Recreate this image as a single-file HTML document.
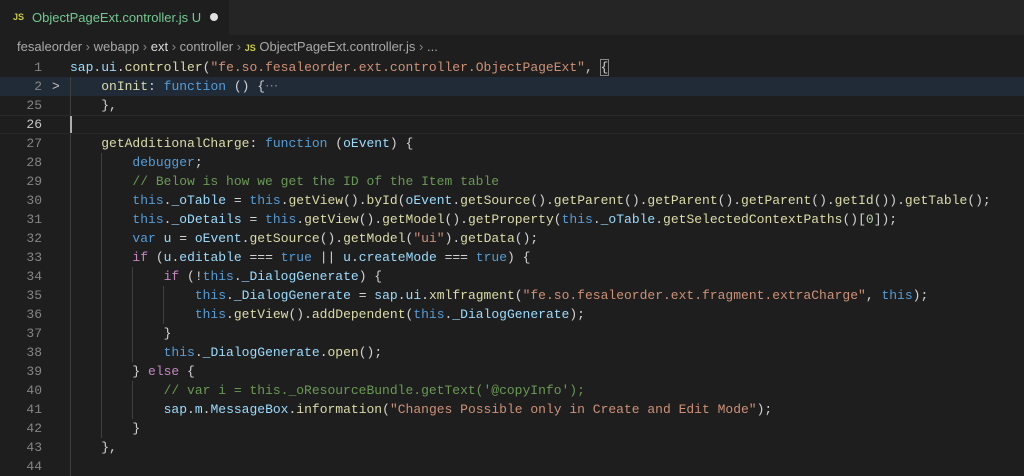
<!DOCTYPE html>
<html><head><meta charset="utf-8"><style>
body{margin:0;width:1024px;height:475px;background:#1e1e1e;overflow:hidden;font-family:"Liberation Sans",sans-serif;position:relative}
.tabs{position:absolute;left:0;top:0;width:1024px;height:35px;background:#252526}
.tab{position:absolute;left:0;top:0;width:229px;height:35px;background:#1e1e1e;color:#73c991;font-size:13px;line-height:35px}
.js{color:#cbcb41;font-weight:bold;font-size:9px;position:absolute;left:13px;top:0}
.bc{position:absolute;left:17px;top:37px;height:20px;line-height:20px;color:#a9a9a9;font-size:13px;white-space:pre}
.code{position:absolute;left:0;top:58px;width:1024px;font-family:"Liberation Mono",monospace;font-size:13px}
.l{height:19px;line-height:19px;white-space:pre;position:relative}
.n{position:absolute;left:0;width:42px;text-align:right;color:#858585}
.t{position:absolute;left:70px;color:#d4d4d4}
.g{position:absolute;top:0;width:1px;height:19px;background:#404040}
.v{color:#9cdcfe}.f{color:#dcdcaa}.s{color:#ce9178}.k{color:#569cd6}.c{color:#6a9955}.p{color:#c586c0}.m{color:#b5cea8}.o{color:#4ec9b0}
</style></head><body>
<div class="tabs"><div class="tab"><span class="js">JS</span><span style="position:absolute;left:32px">ObjectPageExt.controller.js U</span><span style="position:absolute;left:210px;top:13px;width:8px;height:8px;border-radius:50%;background:#e0e0e0"></span></div></div>
<div class="bc">fesaleorder <span style="color:#888">›</span> webapp <span style="color:#888">›</span> <span style="color:#ddd">ext</span> <span style="color:#888">›</span> controller <span style="color:#888">›</span> <span style="color:#cbcb41;font-weight:bold;font-size:9px">JS</span> ObjectPageExt.controller.js <span style="color:#888">›</span> ...</div>
<div class="code">
<div class="l"><span class="n">1</span><span class="t"><span class="v">sap</span>.<span class="v">ui</span>.<span class="f">controller</span>(<span class="s">"fe.so.fesaleorder.ext.controller.ObjectPageExt"</span>, <span style="outline:1px solid #888">{</span></span></div>
<div class="l" style="background:#212b37"><span class="n">2</span><span style="position:absolute;left:52px;color:#c5c5c5">&gt;</span><span class="g" style="left:70px"></span><span class="t">    <span class="f">onInit</span>: <span class="k">function</span> () {<span style="color:#888">⋯</span></span></div>
<div class="l"><span class="n">25</span><span class="g" style="left:70px"></span><span class="t">    },</span></div>
<div class="l" style="border-top:1px solid #282828;border-bottom:1px solid #282828;height:17px;line-height:17px"><span class="n" style="color:#c6c6c6">26</span><span style="position:absolute;left:70px;width:2px;height:17px;background:#aeafad"></span></div>
<div class="l"><span class="n">27</span><span class="g" style="left:70px"></span><span class="t">    <span class="f">getAdditionalCharge</span>: <span class="k">function</span> (<span class="v">oEvent</span>) {</span></div>
<div class="l"><span class="n">28</span><span class="g" style="left:70px"></span><span class="g" style="left:101px"></span><span class="t">        <span class="k">debugger</span>;</span></div>
<div class="l"><span class="n">29</span><span class="g" style="left:70px"></span><span class="g" style="left:101px"></span><span class="t">        <span class="c">// Below is how we get the ID of the Item table</span></span></div>
<div class="l"><span class="n">30</span><span class="g" style="left:70px"></span><span class="g" style="left:101px"></span><span class="t">        <span class="k">this</span>.<span class="v">_oTable</span> = <span class="k">this</span>.<span class="f">getView</span>().<span class="f">byId</span>(<span class="v">oEvent</span>.<span class="f">getSource</span>().<span class="f">getParent</span>().<span class="f">getParent</span>().<span class="f">getParent</span>().<span class="f">getId</span>()).<span class="f">getTable</span>();</span></div>
<div class="l"><span class="n">31</span><span class="g" style="left:70px"></span><span class="g" style="left:101px"></span><span class="t">        <span class="k">this</span>.<span class="v">_oDetails</span> = <span class="k">this</span>.<span class="f">getView</span>().<span class="f">getModel</span>().<span class="f">getProperty</span>(<span class="k">this</span>.<span class="v">_oTable</span>.<span class="f">getSelectedContextPaths</span>()[<span class="m">0</span>]);</span></div>
<div class="l"><span class="n">32</span><span class="g" style="left:70px"></span><span class="g" style="left:101px"></span><span class="t">        <span class="k">var</span> <span class="v">u</span> = <span class="v">oEvent</span>.<span class="f">getSource</span>().<span class="f">getModel</span>(<span class="s">"ui"</span>).<span class="f">getData</span>();</span></div>
<div class="l"><span class="n">33</span><span class="g" style="left:70px"></span><span class="g" style="left:101px"></span><span class="t">        <span class="p">if</span> (<span class="v">u</span>.<span class="v">editable</span> === <span class="k">true</span> || <span class="v">u</span>.<span class="v">createMode</span> === <span class="k">true</span>) {</span></div>
<div class="l"><span class="n">34</span><span class="g" style="left:70px"></span><span class="g" style="left:101px"></span><span class="g" style="left:132px"></span><span class="t">            <span class="p">if</span> (!<span class="k">this</span>.<span class="v">_DialogGenerate</span>) {</span></div>
<div class="l"><span class="n">35</span><span class="g" style="left:70px"></span><span class="g" style="left:101px"></span><span class="g" style="left:132px"></span><span class="g" style="left:163px"></span><span class="t">                <span class="k">this</span>.<span class="v">_DialogGenerate</span> = <span class="v">sap</span>.<span class="v">ui</span>.<span class="f">xmlfragment</span>(<span class="s">"fe.so.fesaleorder.ext.fragment.extraCharge"</span>, <span class="k">this</span>);</span></div>
<div class="l"><span class="n">36</span><span class="g" style="left:70px"></span><span class="g" style="left:101px"></span><span class="g" style="left:132px"></span><span class="g" style="left:163px"></span><span class="t">                <span class="k">this</span>.<span class="f">getView</span>().<span class="f">addDependent</span>(<span class="k">this</span>.<span class="v">_DialogGenerate</span>);</span></div>
<div class="l"><span class="n">37</span><span class="g" style="left:70px"></span><span class="g" style="left:101px"></span><span class="g" style="left:132px"></span><span class="t">            }</span></div>
<div class="l"><span class="n">38</span><span class="g" style="left:70px"></span><span class="g" style="left:101px"></span><span class="g" style="left:132px"></span><span class="t">            <span class="k">this</span>.<span class="v">_DialogGenerate</span>.<span class="f">open</span>();</span></div>
<div class="l"><span class="n">39</span><span class="g" style="left:70px"></span><span class="g" style="left:101px"></span><span class="t">        } <span class="p">else</span> {</span></div>
<div class="l"><span class="n">40</span><span class="g" style="left:70px"></span><span class="g" style="left:101px"></span><span class="g" style="left:132px"></span><span class="t">            <span class="c">// var i = this._oResourceBundle.getText('@copyInfo');</span></span></div>
<div class="l"><span class="n">41</span><span class="g" style="left:70px"></span><span class="g" style="left:101px"></span><span class="g" style="left:132px"></span><span class="t">            <span class="v">sap</span>.<span class="v">m</span>.<span class="v">MessageBox</span>.<span class="f">information</span>(<span class="s">"Changes Possible only in Create and Edit Mode"</span>);</span></div>
<div class="l"><span class="n">42</span><span class="g" style="left:70px"></span><span class="g" style="left:101px"></span><span class="t">        }</span></div>
<div class="l"><span class="n">43</span><span class="g" style="left:70px"></span><span class="t">    },</span></div>
<div class="l"><span class="n">44</span><span class="g" style="left:70px"></span></div>
</div>
</body></html>
